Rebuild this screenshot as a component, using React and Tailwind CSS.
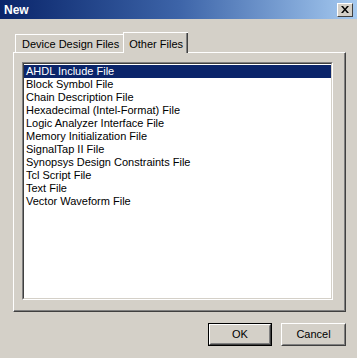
import React from "react";

const items = [
  "AHDL Include File",
  "Block Symbol File",
  "Chain Description File",
  "Hexadecimal (Intel-Format) File",
  "Logic Analyzer Interface File",
  "Memory Initialization File",
  "SignalTap II File",
  "Synopsys Design Constraints File",
  "Tcl Script File",
  "Text File",
  "Vector Waveform File",
];

function Btn({ children, def }) {
  const inner = (
    <div className="w-full h-full border border-t-white border-l-white border-b-[#404040] border-r-[#404040]">
      <div className="w-full h-full flex items-center justify-center border border-t-[#d4d0c8] border-l-[#d4d0c8] border-b-[#808080] border-r-[#808080]">
        {children}
      </div>
    </div>
  );
  if (def) {
    return (
      <div className="w-[64px] h-[23px] border border-black bg-[#d4d0c8]">{inner}</div>
    );
  }
  return <div className="w-[65px] h-[23px] bg-[#d4d0c8]">{inner}</div>;
}

export default function App() {
  return (
    <div
      className="w-[357px] h-[358px] bg-[#d4d0c8] text-[11px] text-black overflow-hidden flex flex-col"
      style={{ fontFamily: '"Liberation Sans", Arial, sans-serif' }}
    >
      <div className="h-[19px] flex items-center justify-between pl-[4px] pr-[4px] bg-gradient-to-r from-[#0a246a] via-[#3d64a8] to-[#a6caf0]">
        <span className="text-white font-bold text-[12px] leading-none">New</span>
        <div className="w-[16px] h-[14px] bg-[#d4d0c8] border border-t-white border-l-white border-b-[#404040] border-r-[#404040] flex items-center justify-center">
          <svg width="8" height="7" viewBox="0 0 8 7">
            <path d="M0 0h2l2 2.5L6 0h2L5 3.5 8 7H6L4 4.5 2 7H0l3-3.5z" fill="#000" />
          </svg>
        </div>
      </div>

      <div className="flex flex-col pl-[13px] pt-[12px]">
        <div className="flex items-end h-[21px] pl-[2px] relative z-10">
          <div className="h-[19px] pl-[6px] pr-[4px] flex items-center border-t border-l border-white border-r border-r-[#808080] mb-[-1px] pt-[1px]">
            Device Design Files
          </div>
          <div className="h-[21px] pl-[6px] pr-[5px] flex items-start pt-[3px] border-t border-white bg-[#d4d0c8] mb-[-1px] ml-[-1px] shadow-[inset_-1px_0_0_#404040,inset_1px_0_0_#ffffff,inset_-2px_0_0_#808080]">
            Other Files
          </div>
        </div>
        <div className="w-[333px] h-[260px] border border-t-white border-l-white border-b-[#404040] border-r-[#404040]">
          <div className="w-full h-full border-b border-r border-b-[#808080] border-r-[#808080] pt-[9px] pl-[8px]">
            <div className="w-[311px] h-[238px] border border-t-[#808080] border-l-[#808080] border-b-white border-r-white">
              <div className="w-full h-full bg-white border border-t-[#404040] border-l-[#404040] border-b-[#d4d0c8] border-r-[#d4d0c8] pt-[1px]">
                {items.map((t, i) => (
                  <div
                    key={t}
                    className={
                      i === 0
                        ? "h-[13px] leading-[13px] pl-[2px] bg-[#0a246a] text-white whitespace-nowrap"
                        : "h-[13px] leading-[13px] pl-[2px] whitespace-nowrap"
                    }
                  >
                    {t}
                  </div>
                ))}
              </div>
            </div>
          </div>
        </div>
        <div className="flex justify-end gap-[9px] w-[333px] mt-[11px]">
          <Btn def>OK</Btn>
          <Btn>Cancel</Btn>
        </div>
      </div>
    </div>
  );
}
